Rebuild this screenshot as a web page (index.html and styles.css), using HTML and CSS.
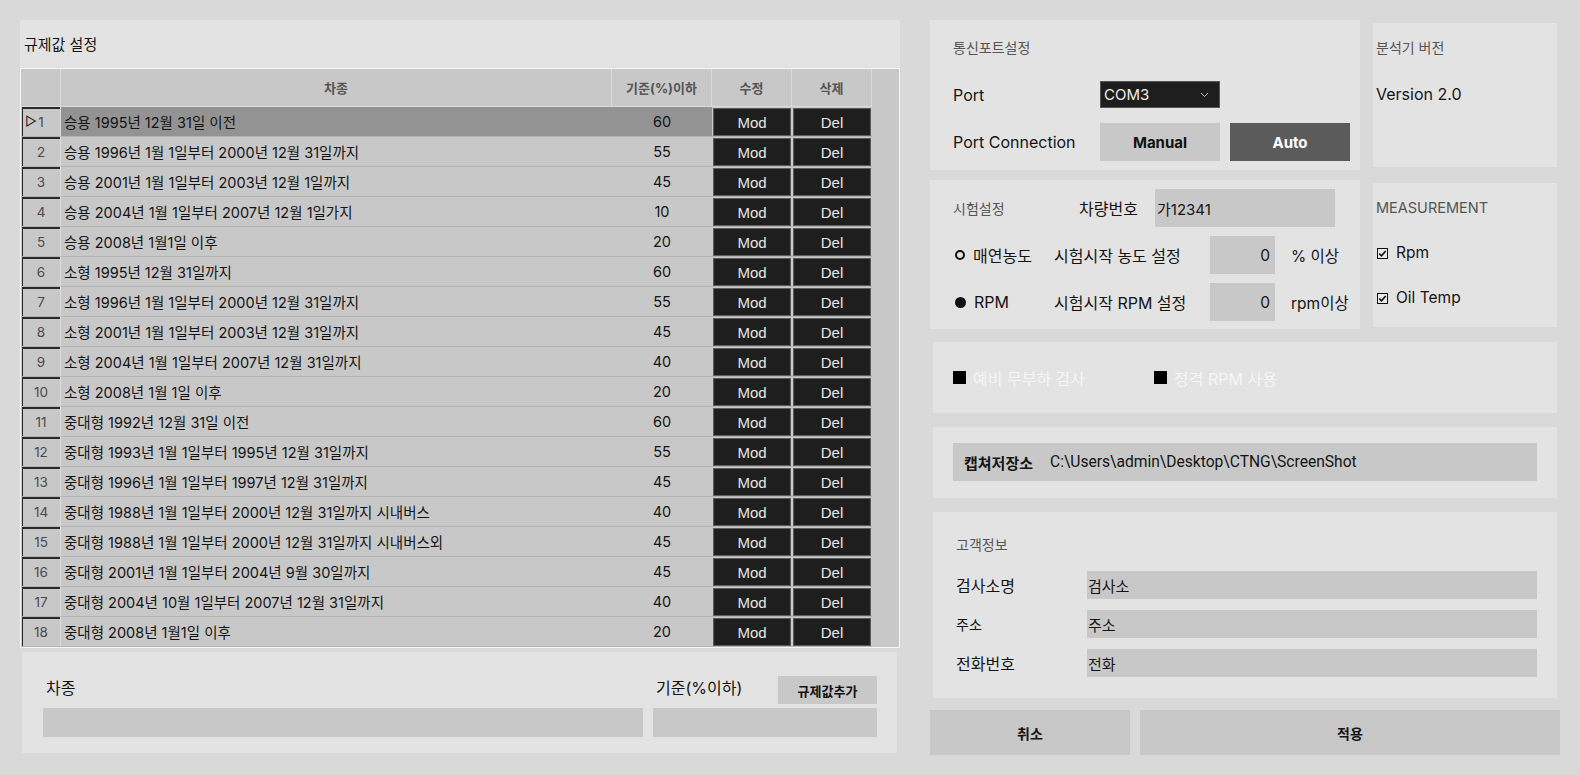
FILE: index.html
```html
<!DOCTYPE html>
<html lang="ko">
<head>
<meta charset="utf-8">
<title>규제값 설정</title>
<link rel="stylesheet" href="styles.css">
</head>
<body>
<div class="app">
  <div class="left">
    <section class="panel reg">
      <div class="reg-title">규제값 설정</div>
      <div class="grid">
        <div class="row head">
          <div class="c rh"></div><div class="c">차종</div><div class="c">기준(%)이하</div><div class="c">수정</div><div class="c">삭제</div><div class="c fill"></div>
        </div>
        <div class="row sel"><div class="c rh"><span class="tri">▷</span>1</div><div class="c name">승용 1995년 12월 31일 이전</div><div class="c val">60</div><div class="c bc"><span class="btn">Mod</span></div><div class="c bc"><span class="btn">Del</span></div><div class="c fill"></div></div>
        <div class="row"><div class="c rh">2</div><div class="c name">승용 1996년 1월 1일부터 2000년 12월 31일까지</div><div class="c val">55</div><div class="c bc"><span class="btn">Mod</span></div><div class="c bc"><span class="btn">Del</span></div><div class="c fill"></div></div>
        <div class="row"><div class="c rh">3</div><div class="c name">승용 2001년 1월 1일부터 2003년 12월 1일까지</div><div class="c val">45</div><div class="c bc"><span class="btn">Mod</span></div><div class="c bc"><span class="btn">Del</span></div><div class="c fill"></div></div>
        <div class="row"><div class="c rh">4</div><div class="c name">승용 2004년 1월 1일부터 2007년 12월 1일가지</div><div class="c val">10</div><div class="c bc"><span class="btn">Mod</span></div><div class="c bc"><span class="btn">Del</span></div><div class="c fill"></div></div>
        <div class="row"><div class="c rh">5</div><div class="c name">승용 2008년 1월1일 이후</div><div class="c val">20</div><div class="c bc"><span class="btn">Mod</span></div><div class="c bc"><span class="btn">Del</span></div><div class="c fill"></div></div>
        <div class="row"><div class="c rh">6</div><div class="c name">소형 1995년 12월 31일까지</div><div class="c val">60</div><div class="c bc"><span class="btn">Mod</span></div><div class="c bc"><span class="btn">Del</span></div><div class="c fill"></div></div>
        <div class="row"><div class="c rh">7</div><div class="c name">소형 1996년 1월 1일부터 2000년 12월 31일까지</div><div class="c val">55</div><div class="c bc"><span class="btn">Mod</span></div><div class="c bc"><span class="btn">Del</span></div><div class="c fill"></div></div>
        <div class="row"><div class="c rh">8</div><div class="c name">소형 2001년 1월 1일부터 2003년 12월 31일까지</div><div class="c val">45</div><div class="c bc"><span class="btn">Mod</span></div><div class="c bc"><span class="btn">Del</span></div><div class="c fill"></div></div>
        <div class="row"><div class="c rh">9</div><div class="c name">소형 2004년 1월 1일부터 2007년 12월 31일까지</div><div class="c val">40</div><div class="c bc"><span class="btn">Mod</span></div><div class="c bc"><span class="btn">Del</span></div><div class="c fill"></div></div>
        <div class="row"><div class="c rh">10</div><div class="c name">소형 2008년 1월 1일 이후</div><div class="c val">20</div><div class="c bc"><span class="btn">Mod</span></div><div class="c bc"><span class="btn">Del</span></div><div class="c fill"></div></div>
        <div class="row"><div class="c rh">11</div><div class="c name">중대형 1992년 12월 31일 이전</div><div class="c val">60</div><div class="c bc"><span class="btn">Mod</span></div><div class="c bc"><span class="btn">Del</span></div><div class="c fill"></div></div>
        <div class="row"><div class="c rh">12</div><div class="c name">중대형 1993년 1월 1일부터 1995년 12월 31일까지</div><div class="c val">55</div><div class="c bc"><span class="btn">Mod</span></div><div class="c bc"><span class="btn">Del</span></div><div class="c fill"></div></div>
        <div class="row"><div class="c rh">13</div><div class="c name">중대형 1996년 1월 1일부터 1997년 12월 31일까지</div><div class="c val">45</div><div class="c bc"><span class="btn">Mod</span></div><div class="c bc"><span class="btn">Del</span></div><div class="c fill"></div></div>
        <div class="row"><div class="c rh">14</div><div class="c name">중대형 1988년 1월 1일부터 2000년 12월 31일까지 시내버스</div><div class="c val">40</div><div class="c bc"><span class="btn">Mod</span></div><div class="c bc"><span class="btn">Del</span></div><div class="c fill"></div></div>
        <div class="row"><div class="c rh">15</div><div class="c name">중대형 1988년 1월 1일부터 2000년 12월 31일까지 시내버스외</div><div class="c val">45</div><div class="c bc"><span class="btn">Mod</span></div><div class="c bc"><span class="btn">Del</span></div><div class="c fill"></div></div>
        <div class="row"><div class="c rh">16</div><div class="c name">중대형 2001년 1월 1일부터 2004년 9월 30일까지</div><div class="c val">45</div><div class="c bc"><span class="btn">Mod</span></div><div class="c bc"><span class="btn">Del</span></div><div class="c fill"></div></div>
        <div class="row"><div class="c rh">17</div><div class="c name">중대형 2004년 10월 1일부터 2007년 12월 31일까지</div><div class="c val">40</div><div class="c bc"><span class="btn">Mod</span></div><div class="c bc"><span class="btn">Del</span></div><div class="c fill"></div></div>
        <div class="row"><div class="c rh">18</div><div class="c name">중대형 2008년 1월1일 이후</div><div class="c val">20</div><div class="c bc"><span class="btn">Mod</span></div><div class="c bc"><span class="btn">Del</span></div><div class="c fill"></div></div>
      </div>
    </section>
    <section class="panel add">
      <div class="add-top">
        <div class="lbl">차종</div>
        <div class="add-right">
          <div class="lbl">기준(%이하)</div>
          <div class="add-btn">규제값추가</div>
        </div>
      </div>
      <div class="add-inputs">
        <div class="field"></div>
        <div class="field"></div>
      </div>
    </section>
  </div>

  <div class="right">
    <div class="top-grid">
      <section class="panel port">
        <div class="cap">통신포트설정</div>
        <div class="port-row r1">
          <div class="plbl">Port</div>
          <div class="select">COM3
            <svg class="chev" width="9" height="6" viewBox="0 0 9 6"><path d="M1 1 L4.5 4.5 L8 1" fill="none" stroke="#bdbdbd" stroke-width="1"/></svg>
          </div>
        </div>
        <div class="port-row r2">
          <div class="plbl">Port Connection</div>
          <div class="pbtn manual">Manual</div>
          <div class="pbtn auto">Auto</div>
        </div>
      </section>
      <section class="panel side ver">
        <div class="cap">분석기 버전</div>
        <div class="ver-text">Version 2.0</div>
      </section>
      <section class="panel test">
        <div class="t-row first">
          <div class="cap t-cap">시험설정</div>
          <div class="t-lbl">차량번호</div>
          <div class="field car">가12341</div>
        </div>
        <div class="t-row">
          <div class="radio"><span class="dot ring"></span>매연농도</div>
          <div class="t-set">시험시작 농도 설정</div>
          <div class="field num">0</div>
          <div class="unit">% 이상</div>
        </div>
        <div class="t-row">
          <div class="radio"><span class="dot fillc"></span>RPM</div>
          <div class="t-set">시험시작 RPM 설정</div>
          <div class="field num">0</div>
          <div class="unit">rpm이상</div>
        </div>
      </section>
      <section class="panel side meas">
        <div class="cap mcap">MEASUREMENT</div>
        <div class="chk first"><svg width="11" height="11" viewBox="0 0 11 11"><rect x="0.5" y="0.5" width="10" height="10" fill="#e9e9e9" stroke="#111"/><path d="M2.3 5.6 L4.5 7.8 L8.7 3" fill="none" stroke="#111" stroke-width="1.6"/></svg>Rpm</div>
        <div class="chk"><svg width="11" height="11" viewBox="0 0 11 11"><rect x="0.5" y="0.5" width="10" height="10" fill="#e9e9e9" stroke="#111"/><path d="M2.3 5.6 L4.5 7.8 L8.7 3" fill="none" stroke="#111" stroke-width="1.6"/></svg>Oil Temp</div>
      </section>
    </div>

    <section class="panel wide opts">
      <div class="opt"><span class="sq"></span>예비 무부하 검사</div>
      <div class="opt"><span class="sq"></span>정격 RPM 사용</div>
    </section>

    <section class="panel wide capture">
      <div class="cap-bar"><b>캡쳐저장소</b><span class="path">C:\Users\admin\Desktop\CTNG\ScreenShot</span></div>
    </section>

    <section class="panel wide cust">
      <div class="cap">고객정보</div>
      <div class="c-row"><div class="c-lbl">검사소명</div><div class="field c-in">검사소</div></div>
      <div class="c-row"><div class="c-lbl small">주소</div><div class="field c-in">주소</div></div>
      <div class="c-row"><div class="c-lbl">전화번호</div><div class="field c-in">전화</div></div>
    </section>

    <div class="actions">
      <div class="act cancel">취소</div>
      <div class="act apply">적용</div>
    </div>
  </div>
</div>
</body>
</html>
```

FILE: styles.css
```css
* { box-sizing: border-box; margin: 0; padding: 0; }
html, body { width: 1580px; height: 775px; overflow: hidden; }
body {
  background: #d9d9d9;
  font-family: Inter, "Noto Sans CJK KR", sans-serif;
  color: #141414;
}
.app { display: flex; padding: 20px 0 0 20px; }
.left { width: 880px; }
.panel { background: #e3e3e3; }

/* regulation table */
.reg { height: 628px; }
.reg-title { height: 48px; padding: 15px 0 0 4px; font-size: 15px; line-height: 20px; }
.grid { border: 1px solid #f6f6f6; background: #c8c8c8; height: 580px; }
.row { display: grid; grid-template-columns: 40px 551px 100px 80px 80px 27px; height: 30px; }
.row.head { height: 38px; }
.c { display: flex; align-items: center; font-size: 14.5px; border-bottom: 1px solid #b3b3b3; min-width: 0; white-space: nowrap; }
.head .c {
  justify-content: center; font-weight: 700; color: #555; font-size: 13px;
  border-bottom: 1px solid #dcdcdc; border-right: 1px solid #dcdcdc;
}
.head .c.fill { border: none; }
.c.fill { border-bottom: none; }
.rh {
  justify-content: center; color: #4a4a4a; font-size: 13.5px;
  border-right: 1px solid #dcdcdc;
  border-left: 1px solid #c8c8c8;
  box-shadow: inset 1px 0 0 #2a2a2a, inset 0 2px 0 #2a2a2a;
  position: relative;
}
.head .rh { box-shadow: none; border-left: none; }
.tri { position: absolute; left: 3px; top: 6px; font-size: 13px; color: #222; line-height: 16px; }
.name { padding-left: 3px; }
.val { justify-content: center; }
.sel .name, .sel .val { background: #939393; }
.bc { padding: 1px 1px 0 1px; }
.btn {
  flex: 1; height: 28px; background: #1e1e1e; border: 1px solid #5c5c5c;
  color: #e6e6e6; font-family: "Liberation Sans", Arial, sans-serif; font-size: 15px;
  display: flex; align-items: center; justify-content: center;
}

/* add panel */
.add { margin: 4px 0 0 2px; width: 875px; height: 101px; padding: 24px 20px 0 21px; }
.add-top { display: grid; grid-template-columns: 600px 224px; column-gap: 10px; height: 28px; }
.lbl { font-size: 16px; line-height: 28px; margin-top: -2px; padding-left: 3px; }
.add-right { display: flex; justify-content: space-between; }
.add-btn {
  width: 99px; height: 28px; background: #c8c8c8; font-weight: 700; font-size: 13px;
  display: flex; align-items: center; justify-content: center; color: #111;
}
.add-inputs { display: grid; grid-template-columns: 600px 224px; column-gap: 10px; margin-top: 4px; }
.field { background: #c8c8c8; height: 29px; font-size: 15px; display: flex; align-items: center; }

/* right column */
.right { width: 630px; margin-left: 30px; }
.top-grid { display: grid; grid-template-columns: 430px 184px; column-gap: 13px; row-gap: 10px; }
.cap { font-size: 14px; color: #555; line-height: 20px; }
.mcap { font-size: 14.5px; }
.port { height: 150px; padding: 18px 0 0 23px; }
.port-row { display: flex; align-items: center; }
.port-row.r1 { margin-top: 23px; height: 27px; }
.port-row.r2 { margin-top: 15px; height: 38px; }
.plbl { width: 147px; font-size: 16px; }
.select {
  width: 120px; height: 27px; background: #1e1e1e; border: 1px solid #555;
  color: #eee; font-size: 15px; display: flex; align-items: center; padding-left: 3px; position: relative;
}
.chev { position: absolute; right: 10px; top: 10px; }
.pbtn {
  width: 120px; height: 38px; display: flex; align-items: center; justify-content: center;
  font-weight: 700; font-size: 15px;
}
.manual { background: #c8c8c8; color: #111; }
.auto { background: #5b5b5b; color: #fff; margin-left: 10px; }

.side { margin-top: 3px; height: 144px; padding: 15px 0 0 3px; }
.ver-text { margin-top: 25px; font-size: 16px; line-height: 22px; }

.test { height: 149px; padding: 9px 0 0 23px; }
.t-row { display: flex; align-items: center; height: 38px; margin-top: 9px; }
.t-row.first { margin-top: 0; }
.t-cap { width: 126px; padding-top: 2px; }
.t-lbl { width: 76px; font-size: 16px; }
.field.car { width: 180px; height: 38px; padding-left: 2px; }
.radio { width: 101px; font-size: 16px; display: flex; align-items: center; }
.dot { width: 10px; height: 10px; border-radius: 50%; margin: 0 8px 0 2px; }
.ring { border: 2.5px solid #111; }
.fillc { background: #111; width: 11px; height: 11px; }
.t-set { width: 156px; font-size: 16px; }
.field.num { width: 65px; height: 38px; justify-content: flex-end; padding-right: 5px; font-size: 15.5px; }
.unit { margin-left: 16px; font-size: 15.5px; }

.meas .chk { display: flex; align-items: center; font-size: 15.5px; line-height: 22px; padding-left: 1px; margin-top: 23px; }
.meas .chk.first { margin-top: 24px; }
.chk svg { margin-right: 8px; }

.wide { width: 624px; margin-left: 3px; }
.opts { margin-top: 13px; height: 71px; display: flex; align-items: center; padding-left: 20px; }
.opt { width: 201px; display: flex; align-items: center; font-size: 16px; color: #f6f6f6; }
.sq { width: 13px; height: 13px; background: #000; margin-right: 7px; }

.capture { margin-top: 14px; height: 71px; padding: 16px 20px 0 20px; }
.cap-bar { height: 38px; background: #c8c8c8; display: flex; align-items: center; padding-left: 11px; }
.cap-bar b { font-size: 15px; width: 86px; }
.path { font-family: Roboto, sans-serif; font-size: 15.6px; }

.cust { margin-top: 14px; height: 186px; padding: 23px 20px 0 23px; }
.c-row { display: flex; align-items: center; margin-top: 11px; height: 28px; }
.cust .cap + .c-row { margin-top: 16px; }
.c-lbl { width: 131px; font-size: 16px; }
.c-lbl.small { font-size: 14px; }
.field.c-in { flex: 1; height: 28px; padding-left: 1px; }

.actions { display: flex; margin-top: 12px; height: 45px; gap: 10px; }
.act { background: #c8c8c8; display: flex; align-items: center; justify-content: center; font-weight: 700; font-size: 14px; }
.cancel { width: 200px; }
.apply { width: 420px; }
```
